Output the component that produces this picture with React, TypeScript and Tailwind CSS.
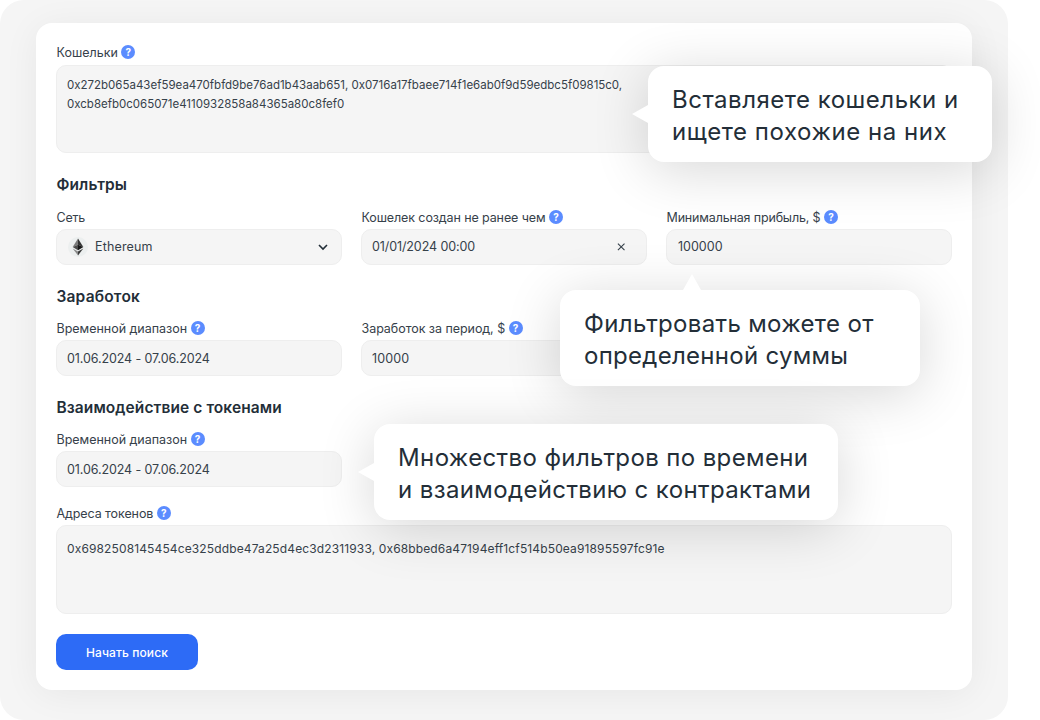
import React from "react";

interface LabelProps {
  text: string;
  tracking?: string;
  hint?: boolean;
}

const Label: React.FC<LabelProps> = ({ text, tracking = "", hint = true }) => (
  <div className="flex items-center gap-[3.5px] h-[18px] pl-[0.5px]">
    <span
      className={`pt-0.5 text-[12.5px] leading-[18px] whitespace-nowrap text-[#36414a] ${tracking}`}
    >
      {text}
    </span>
    {hint && (
      <span className="w-3.5 h-3.5 shrink-0 rounded-full bg-[#5b8cff] text-white text-[10px] leading-[14px] font-bold text-center">
        ?
      </span>
    )}
  </div>
);

interface FieldProps extends LabelProps {
  children: React.ReactNode;
}

const Field: React.FC<FieldProps> = ({ children, ...label }) => (
  <div className="flex flex-col gap-[3px]">
    <Label {...label} />
    <div className="flex items-center h-9 px-[10px] rounded-[10px] border border-[#eeeeee] bg-[#f5f5f5] text-[12.5px] text-[#36414a]">
      {children}
    </div>
  </div>
);

interface HeadingProps {
  children: React.ReactNode;
  tracking: string;
}

const Heading: React.FC<HeadingProps> = ({ children, tracking }) => (
  <h2
    className={`h-6 pt-px pl-[0.5px] text-[15.5px] leading-6 font-semibold text-[#232e38] ${tracking}`}
  >
    {children}
  </h2>
);

interface CalloutProps {
  className: string;
  arrow: "left" | "top";
  lines: { text: string; tracking: string }[];
}

const Callout: React.FC<CalloutProps> = ({ className, arrow, lines }) => (
  <div
    className={`absolute h-24 rounded-2xl bg-white pl-6 pt-[18px] shadow-[0_8px_56px_rgba(0,0,0,0.16)] ${className}`}
  >
    {arrow === "left" ? (
      <svg
        className="absolute -left-4 top-[39px] w-4 h-[18px]"
        viewBox="0 0 16 18"
        fill="white"
      >
        <path d="M0 9L16 0V18Z" />
      </svg>
    ) : (
      <svg
        className="absolute left-[123px] -top-4 w-[18px] h-4"
        viewBox="0 0 18 16"
        fill="white"
      >
        <path d="M9 0L18 16H0Z" />
      </svg>
    )}
    {lines.map((line) => (
      <p
        key={line.text}
        className={`text-[24px] leading-8 whitespace-nowrap text-[#232e38] ${line.tracking}`}
      >
        {line.text}
      </p>
    ))}
  </div>
);

const EthereumIcon = () => (
  <svg className="ml-px w-5 h-5" viewBox="0 0 20 20">
    <circle cx="10" cy="10" r="10" fill="#ecefef" />
    <path d="M10 1.5L4.7 10.1L10 7.8Z" fill="#7a7a7a" />
    <path d="M10 1.5L15.3 10.1L10 7.8Z" fill="#343434" />
    <path d="M4.7 10.1L10 7.8V13.2Z" fill="#4a4a4a" />
    <path d="M15.3 10.1L10 7.8V13.2Z" fill="#161616" />
    <path d="M4.7 11.4L10 14.5V18.6Z" fill="#8a8a8a" />
    <path d="M15.3 11.4L10 14.5V18.6Z" fill="#3a3a3a" />
  </svg>
);

export default function App() {
  return (
    <div className="relative w-[1040px] h-[720px] overflow-hidden bg-white font-['Inter',sans-serif]">
      <div className="w-[1008px] h-[720px] rounded-3xl bg-[#f5f5f5] pl-9 pt-[23px]">
        <main className="w-[936px] h-[667px] rounded-2xl bg-white pl-5 pt-5 shadow-[0_4px_36px_rgba(0,0,0,0.06)]">
          <div className="w-[896px]">
            <Label text="Кошельки" />
            <div className="mt-1 h-[88px] rounded-[10px] border border-[#eeeeee] bg-[#f5f5f5] px-[10px] pt-[10px] text-[11.5px] leading-[18.5px] text-[#36414a]">
              <p>
                0x272b065a43ef59ea470fbfd9be76ad1b43aab651,
                0x0716a17fbaee714f1e6ab0f9d59edbc5f09815c0,
              </p>
              <p>0xcb8efb0c065071e4110932858a84365a80c8fef0</p>
            </div>

            {/* Filters */}
            <div className="mt-[19px]">
              <Heading tracking="tracking-[0.1px]">Фильтры</Heading>
              <div className="mt-3 grid grid-cols-3 gap-[19px]">
                <Field text="Сеть" hint={false} tracking="tracking-[-0.2px]">
                  <EthereumIcon />
                  <span className="ml-[7px] pt-px flex-1 tracking-[0.15px]">
                    Ethereum
                  </span>
                  <svg
                    className="mr-[2px] w-3 h-3"
                    viewBox="0 0 12 12"
                    fill="none"
                    stroke="#232e38"
                    strokeWidth={1.6}
                  >
                    <path d="M2 4L6 8L10 4" />
                  </svg>
                </Field>
                <Field
                  text="Кошелек создан не ранее чем"
                  tracking="tracking-[-0.11px]"
                >
                  <span className="flex-1 pt-px tracking-[-0.1px]">
                    01/01/2024 00:00
                  </span>
                  <svg
                    className="mr-[10px] w-2.5 h-2.5"
                    viewBox="0 0 10 10"
                    fill="none"
                    stroke="#36414a"
                    strokeWidth={1.1}
                  >
                    <path d="M1.9 1.6L8.5 8.2M8.5 1.6L1.9 8.2" />
                  </svg>
                </Field>
                <Field
                  text="Минимальная прибыль, $"
                  tracking="tracking-[-0.16px]"
                >
                  <span className="ml-px pt-px">100000</span>
                </Field>
              </div>
            </div>

            {/* Earnings */}
            <div className="mt-[19px]">
              <Heading tracking="tracking-[0.18px]">Заработок</Heading>
              <div className="mt-[11px] grid grid-cols-3 gap-[19px]">
                <Field text="Временной диапазон" tracking="tracking-[-0.02px]">
                  <span className="pt-0.5 tracking-[-0.1px]">
                    01.06.2024 - 07.06.2024
                  </span>
                </Field>
                <Field
                  text="Заработок за период, $"
                  tracking="tracking-[-0.05px]"
                >
                  <span className="pt-0.5 tracking-[0.15px]">10000</span>
                </Field>
              </div>
            </div>

            {/* Token interaction */}
            <div className="mt-[19px]">
              <Heading tracking="tracking-[0.09px]">
                Взаимодействие с токенами
              </Heading>
              <div className="mt-[11px] grid grid-cols-3 gap-[19px]">
                <Field text="Временной диапазон" tracking="tracking-[-0.02px]">
                  <span className="pt-0.5 tracking-[-0.1px]">
                    01.06.2024 - 07.06.2024
                  </span>
                </Field>
              </div>
            </div>

            <div className="mt-[17px]">
              <Label text="Адреса токенов" tracking="tracking-[-0.09px]" />
              <div className="mt-[3px] h-[89px] rounded-[10px] border border-[#eeeeee] bg-[#f5f5f5] px-[10px] pt-[14px] text-[12px] leading-[18px] text-[#36414a]">
                <p className="tracking-[0.13px]">
                  0x6982508145454ce325ddbe47a25d4ec3d2311933,
                  0x68bbed6a47194eff1cf514b50ea91895597fc91e
                </p>
              </div>
            </div>

            <button className="mt-5 pt-0.5 flex items-center justify-center w-[142px] h-9 rounded-[10px] bg-[#2d6bf6] text-[12px] font-medium text-white tracking-[0.1px]">
              Начать поиск
            </button>
          </div>
        </main>
      </div>

      {/* Callouts over the form */}
      <Callout
        className="left-[648px] top-[66px] w-[344px]"
        arrow="left"
        lines={[
          { text: "Вставляете кошельки и", tracking: "tracking-[0.5px]" },
          { text: "ищете похожие на них", tracking: "tracking-[0.55px]" },
        ]}
      />
      <Callout
        className="left-[560px] top-[290px] w-[360px]"
        arrow="top"
        lines={[
          { text: "Фильтровать можете от", tracking: "tracking-[0.34px]" },
          { text: "определенной суммы", tracking: "tracking-[0.28px]" },
        ]}
      />
      <Callout
        className="left-[374px] top-[424px] w-[464px]"
        arrow="left"
        lines={[
          {
            text: "Множество фильтров по времени",
            tracking: "tracking-[0.38px]",
          },
          {
            text: "и взаимодействию с контрактами",
            tracking: "tracking-[0.38px]",
          },
        ]}
      />
    </div>
  );
}
